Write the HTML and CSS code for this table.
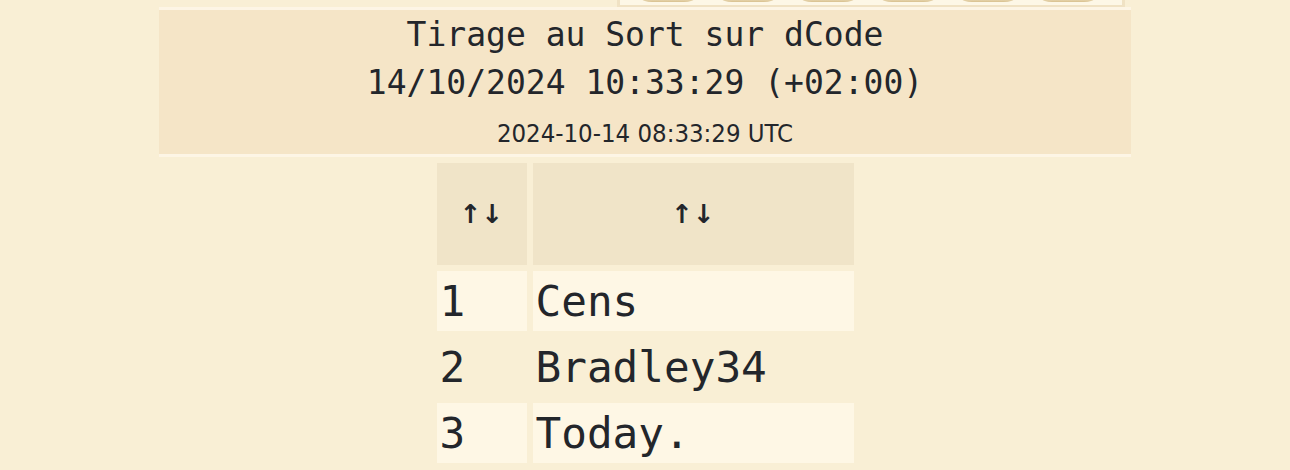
FILE: index.html
```html
<!DOCTYPE html>
<html lang="fr">
<head>
<meta charset="utf-8">
<title>Tirage au Sort sur dCode</title>
<link rel="stylesheet" href="styles.css">
</head>
<body>
<div class="page">
  <div class="toolbar-row">
    <div class="toolbar">
      <span class="tb-btn"></span>
      <span class="tb-btn"></span>
      <span class="tb-btn"></span>
      <span class="tb-btn"></span>
      <span class="tb-btn"></span>
      <span class="tb-btn"></span>
    </div>
  </div>
  <div class="draw-header">
    <div class="draw-title">Tirage au Sort sur dCode</div>
    <div class="draw-date">14/10/2024 10:33:29 (+02:00)</div>
    <div class="draw-utc">2024-10-14 08:33:29 UTC</div>
  </div>
  <table class="results">
    <thead>
      <tr>
        <th class="col-rank">↑↓</th>
        <th class="col-name">↑↓</th>
      </tr>
    </thead>
    <tbody>
      <tr class="odd"><td>1</td><td>Cens</td></tr>
      <tr class="even"><td>2</td><td>Bradley34</td></tr>
      <tr class="odd"><td>3</td><td>Today.</td></tr>
    </tbody>
  </table>
</div>
</body>
</html>
```

FILE: styles.css
```css
html, body {
  margin: 0;
  padding: 0;
  background: #f9efd5;
  color: #23262b;
}

.page {
  width: 972px;
  margin: 0 auto;
}

.toolbar-row {
  display: flex;
  justify-content: flex-end;
  padding-right: 6px;
}

.toolbar {
  box-sizing: border-box;
  width: 508px;
  height: 7px;
  background: #fdf7e6;
  border: 3px solid #f0e2c4;
  border-top: none;
  border-bottom-width: 2px;
  display: flex;
  gap: 28px;
  padding-left: 22px;
  overflow: hidden;
}

.tb-btn {
  display: block;
  flex: none;
  width: 52px;
  height: 20px;
  margin-top: -18px;
  border-radius: 0 0 10px 10px / 0 0 3px 3px;
  background: linear-gradient(#f3e6c8 80%, #d8c08e);
}

.draw-header {
  background: #f5e5c7;
  border-top: 3px solid #fdf5e5;
  border-bottom: 3px solid #fdf5e5;
  text-align: center;
  padding: 1px 0 0;
  height: 143px;
  overflow: hidden;
}

.draw-title,
.draw-date {
  font-family: "DejaVu Sans Mono", monospace;
  font-size: 33px;
  line-height: 48px;
}

.draw-utc {
  font-family: "DejaVu Sans", sans-serif;
  font-stretch: condensed;
  font-size: 25.5px;
  line-height: 52px;
}

.results {
  border-collapse: separate;
  border-spacing: 6px;
  margin: 0 auto;
}

.results th {
  background: #f0e4c8;
  height: 102px;
  padding: 0;
  font-family: "DejaVu Sans", sans-serif;
  font-weight: bold;
  font-size: 26px;
  text-align: center;
  vertical-align: middle;
}

.results .col-rank { width: 90px; }
.results .col-name { width: 321px; }

.results td {
  height: 60px;
  padding: 0 3px;
  font-family: "DejaVu Sans Mono", monospace;
  font-size: 42.7px;
  line-height: 60px;
  vertical-align: middle;
}

.results tr.odd td {
  background: #fef7e5;
}
```
